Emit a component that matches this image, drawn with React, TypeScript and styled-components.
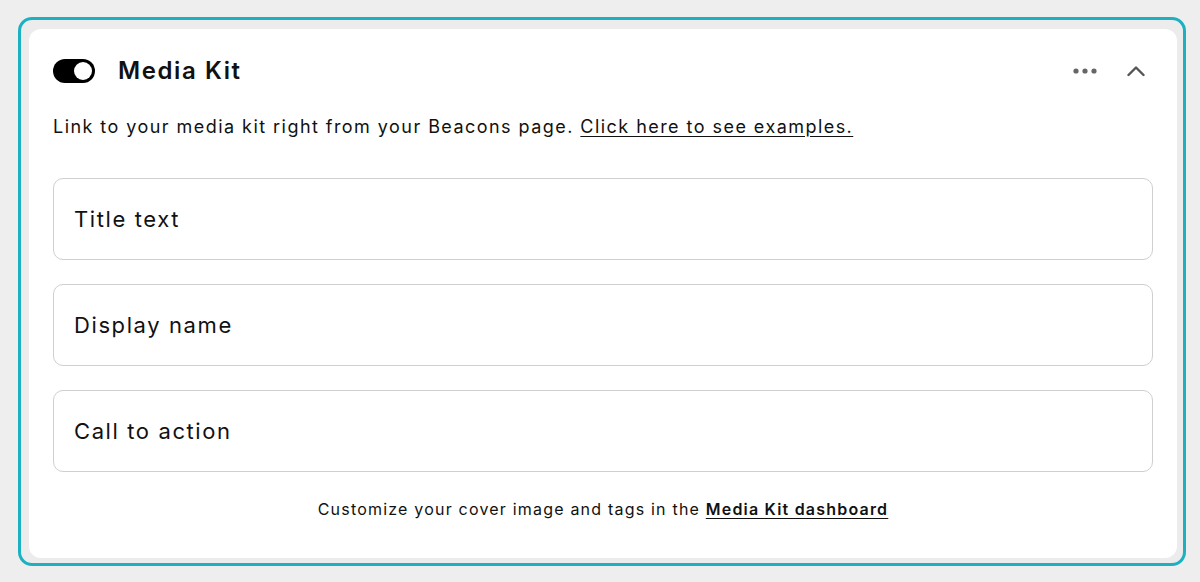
import React from "react";
import styled, { createGlobalStyle } from "styled-components";

const Global = createGlobalStyle`
  html, body { margin: 0; padding: 0; background: #eeeeee; }
  body { font-family: "Inter", "Noto Sans", sans-serif; color: #111; }
  * { box-sizing: border-box; }
`;

const Page = styled.div`
  width: 1200px;
  height: 582px;
  padding: 17px 14px 16px 18px;
  background: #eeeeee;
`;

const Frame = styled.div`
  height: 549px;
  border: 3px solid #1cb1c0;
  border-radius: 14px;
  background: #ececec;
  padding: 9px 6px 5px 8px;
  display: flex;
`;

const Card = styled.div`
  flex: 1;
  background: #ffffff;
  border-radius: 12px;
  padding: 0 24px 0 24px;
  display: flex;
  flex-direction: column;
`;

const Header = styled.div`
  height: 83px;
  display: flex;
  align-items: center;
`;

const Toggle = styled.div`
  width: 42px;
  height: 24px;
  border-radius: 12px;
  background: #000;
  position: relative;
  flex: none;
`;

const Knob = styled.div`
  position: absolute;
  right: 3px;
  top: 3px;
  width: 18px;
  height: 18px;
  border-radius: 50%;
  background: #fff;
`;

const Title = styled.h2`
  margin: 0 0 0 23px;
  font-size: 24px;
  font-weight: 600;
  letter-spacing: 1.6px;
  color: #111;
  flex: 1;
`;

const IconBtn = styled.button`
  border: 0;
  background: none;
  padding: 0;
  display: flex;
  align-items: center;
  justify-content: center;
  cursor: pointer;
`;

const Actions = styled.div`
  display: flex;
  align-items: center;
  gap: 30px;
  margin-right: 8px;
`;

const Desc = styled.p`
  margin: 1px 0 0;
  font-size: 18px;
  line-height: 28px;
  letter-spacing: 1.45px;
  color: #111;
`;

const Link = styled.a`
  color: #111;
  text-decoration: underline;
  text-underline-offset: 3px;
`;

const Fields = styled.div`
  margin-top: 37px;
  display: flex;
  flex-direction: column;
  gap: 24px;
`;

const Field = styled.div`
  height: 82px;
  border: 1px solid #cfcfcf;
  border-radius: 10px;
  display: flex;
  align-items: center;
  padding: 0 20px;
  font-size: 22px;
  letter-spacing: 1.6px;
  color: #111;
`;

const Footer = styled.p`
  margin: 25px 0 0;
  text-align: center;
  font-size: 16px;
  line-height: 24px;
  letter-spacing: 1.2px;
  color: #111;
`;

const FooterLink = styled.a`
  color: #111;
  font-weight: 600;
  text-decoration: underline;
  text-underline-offset: 3px;
`;

export default function App() {
  return (
    <>
      <Global />
      <Page>
        <Frame>
          <Card>
            <Header>
              <Toggle>
                <Knob />
              </Toggle>
              <Title>Media Kit</Title>
              <Actions>
                <IconBtn aria-label="More">
                  <svg width="24" height="6" viewBox="0 0 24 6">
                    <circle cx="3" cy="3" r="2.6" fill="#666" />
                    <circle cx="12" cy="3" r="2.6" fill="#666" />
                    <circle cx="21" cy="3" r="2.6" fill="#666" />
                  </svg>
                </IconBtn>
                <IconBtn aria-label="Collapse">
                  <svg width="18" height="12" viewBox="0 0 18 12">
                    <path d="M1.5 10 L9 2.5 L16.5 10" fill="none" stroke="#555" strokeWidth="2.4" strokeLinecap="round" strokeLinejoin="round" />
                  </svg>
                </IconBtn>
              </Actions>
            </Header>
            <Desc>
              Link to your media kit right from your Beacons page.{" "}
              <Link href="#">Click here to see examples.</Link>
            </Desc>
            <Fields>
              <Field>Title text</Field>
              <Field>Display name</Field>
              <Field>Call to action</Field>
            </Fields>
            <Footer>
              Customize your cover image and tags in the{" "}
              <FooterLink href="#">Media Kit dashboard</FooterLink>
            </Footer>
          </Card>
        </Frame>
      </Page>
    </>
  );
}
